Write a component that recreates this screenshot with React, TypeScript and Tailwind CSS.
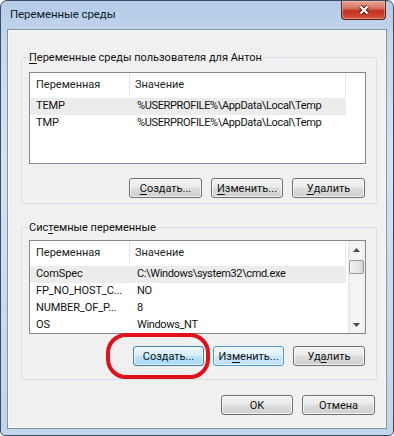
import type { ReactNode } from 'react'

type Variant = 'normal' | 'hot' | 'def'

function Btn({ children, className, variant = 'normal' }: { children: ReactNode; className: string; variant?: Variant }) {
  const look =
    variant === 'hot'
      ? 'border-[#3c7fb1] bg-[linear-gradient(#eaf6fd_0%,#d9f0fc_45%,#bee6fd_50%,#a7d9f5_100%)]'
      : variant === 'def'
        ? 'border-[#4a9ad4] bg-[linear-gradient(#eef8fe_0%,#e0f1fb_45%,#cde8f8_50%,#bfe1f6_100%)]'
        : 'border-[#707070] bg-[linear-gradient(#f2f2f2_0%,#ebebeb_45%,#dddddd_50%,#cfcfcf_100%)]'
  return (
    <div
      className={`flex h-[20px] items-center justify-center rounded-[3px] border text-[11px] leading-none text-[#111] shadow-[inset_0_0_0_1px_rgba(255,255,255,0.7)] ${look} ${className}`}
    >
      {children}
    </div>
  )
}

function Acc({ children }: { children: ReactNode }) {
  return <span className="underline underline-offset-[2px]">{children}</span>
}

function Header() {
  return (
    <div className="flex h-[24px] items-center text-[11px] text-[#1e1e1e]">
      <div className="h-full w-[100px] border-r border-[#e3e6ea] pl-[6px] leading-[24px]">Переменная</div>
      <div className="h-full w-[216px] border-r border-[#e3e6ea] pl-[5px] leading-[24px]">Значение</div>
    </div>
  )
}

function Row({ name, value, selected }: { name: string; value: string; selected?: boolean }) {
  return (
    <div className={`flex h-[17px] w-[316px] items-center text-[11px] text-[#111] ${selected ? 'bg-[#ececec]' : ''}`}>
      <div className="w-[100px] overflow-hidden whitespace-nowrap pl-[6px] tracking-[-0.1px]">{name}</div>
      <div className="w-[216px] overflow-hidden whitespace-nowrap pl-[7px] tracking-[-0.35px]">{value}</div>
    </div>
  )
}

function Arrow({ up }: { up?: boolean }) {
  return (
    <svg width="7" height="4" viewBox="0 0 7 4">
      <path d={up ? 'M0 4 L3.5 0 L7 4 Z' : 'M0 0 L3.5 4 L7 0 Z'} fill="#4a4a4a" />
    </svg>
  )
}

export default function App() {
  return (
    <div className="relative h-[436px] w-[394px] bg-white font-['Roboto','Liberation_Sans',sans-serif]">
      <div className="relative flex h-full w-full flex-col rounded-t-[7px] rounded-b-[5px] border border-[#3b4d62] bg-[linear-gradient(180deg,#b3cbe6_0%,#c6d9ef_10%,#d4e3f4_35%,#c9dbee_70%,#c1d5eb_100%)]">
        {/* title bar */}
        <div className="flex h-[28px] items-center pl-[9px] text-[11.5px] tracking-[-0.1px] text-[#0c1a2a]">Переменные среды</div>
        <div className="absolute right-[7px] top-0 flex h-[19px] w-[45px] items-center justify-center rounded-b-[4px] border border-t-0 border-[#5e201a] bg-[linear-gradient(180deg,#e9a493_0%,#d8705e_40%,#c2311f_55%,#d4503a_100%)] shadow-[inset_0_0_0_1px_rgba(255,200,190,0.45)]">
          <svg width="14" height="12" viewBox="0 0 14 12">
            <path d="M3.5 2.5 L10.5 9.5 M10.5 2.5 L3.5 9.5" stroke="#4a1d18" strokeWidth="4.2" />
            <path d="M3.5 2.5 L10.5 9.5 M10.5 2.5 L3.5 9.5" stroke="#fff" strokeWidth="2.2" />
          </svg>
        </div>

        {/* client area */}
        <div className="mx-[6px] mb-[6px] flex flex-1 flex-col border border-[#7f93aa] bg-[#f0f0f0] shadow-[inset_0_0_0_1px_#fbfbfb]">
          <fieldset className="ml-[13px] mr-[9px] mt-[20px] rounded-[3px] border border-[#d5dfe5] pb-[5px] pl-[7px] pr-[10px]">
            <legend className="-ml-[1px] px-[1px] text-[11px] leading-[15px] text-[#111]">
              <Acc>П</Acc>еременные среды пользователя для Антон
            </legend>
            <div className="mt-[7px] h-[92px] border border-[#828790] bg-white">
              <Header />
              <div className="mt-[1px]">
                <Row name="TEMP" value="%USERPROFILE%\AppData\Local\Temp" selected />
                <Row name="TMP" value="%USERPROFILE%\AppData\Local\Temp" />
              </div>
            </div>
            <div className="mt-[14px] flex justify-end gap-[9px] pr-[1px]">
              <Btn className="w-[73px]"><Acc>С</Acc>оздать...</Btn>
              <Btn className="w-[72px]"><Acc>И</Acc>зменить...</Btn>
              <Btn className="w-[73px]"><Acc>У</Acc>далить</Btn>
            </div>
          </fieldset>

          <fieldset className="ml-[13px] mr-[9px] mt-[16px] rounded-[3px] border border-[#d5dfe5] pb-[13px] pl-[7px] pr-[10px]">
            <legend className="-ml-[1px] px-[1px] text-[11px] leading-[15px] text-[#111]">
              Сис<Acc>т</Acc>емные переменные
            </legend>
            <div className="mt-[5px] flex h-[94px] border border-[#828790] bg-white">
              <div className="flex-1">
                <Header />
                <div className="mt-[1px]">
                  <Row name="ComSpec" value="C:\Windows\system32\cmd.exe" selected />
                  <Row name="FP_NO_HOST_C..." value="NO" />
                  <Row name="NUMBER_OF_P..." value="8" />
                  <Row name="OS" value="Windows_NT" />
                </div>
              </div>
              <div className="flex w-[17px] flex-col bg-[linear-gradient(90deg,#e6e6e6_0%,#f4f4f4_20%,#f4f4f4_80%,#ececec_100%)]">
                <div className="flex h-[17px] items-center justify-center">
                  <Arrow up />
                </div>
                <div className="mx-[1px] mt-[2px] h-[14px] rounded-[2px] border border-[#979797] bg-[linear-gradient(90deg,#f4f4f4_0%,#e6e6e6_50%,#d8d8d8_100%)]" />
                <div className="flex-1" />
                <div className="flex h-[17px] items-center justify-center">
                  <Arrow />
                </div>
              </div>
            </div>
            <div className="mt-[12px] flex justify-end gap-[9px] pr-[1px]">
              <Btn className="w-[71px]" variant="hot">Создать...</Btn>
              <Btn className="w-[71px]" variant="def">Из<Acc>м</Acc>енить...</Btn>
              <Btn className="w-[72px]">Уд<Acc>а</Acc>лить</Btn>
            </div>
          </fieldset>

          <div className="mr-[11px] mt-[15px] flex justify-end gap-[9px]">
            <Btn className="w-[72px]">OK</Btn>
            <Btn className="w-[73px]">Отмена</Btn>
          </div>
        </div>
      </div>

      {/* red annotation oval */}
      <div className="absolute left-[106px] top-[333px] h-[46px] w-[104px] rounded-[20px] border-[4px] border-[#e2101b]" />
    </div>
  )
}
